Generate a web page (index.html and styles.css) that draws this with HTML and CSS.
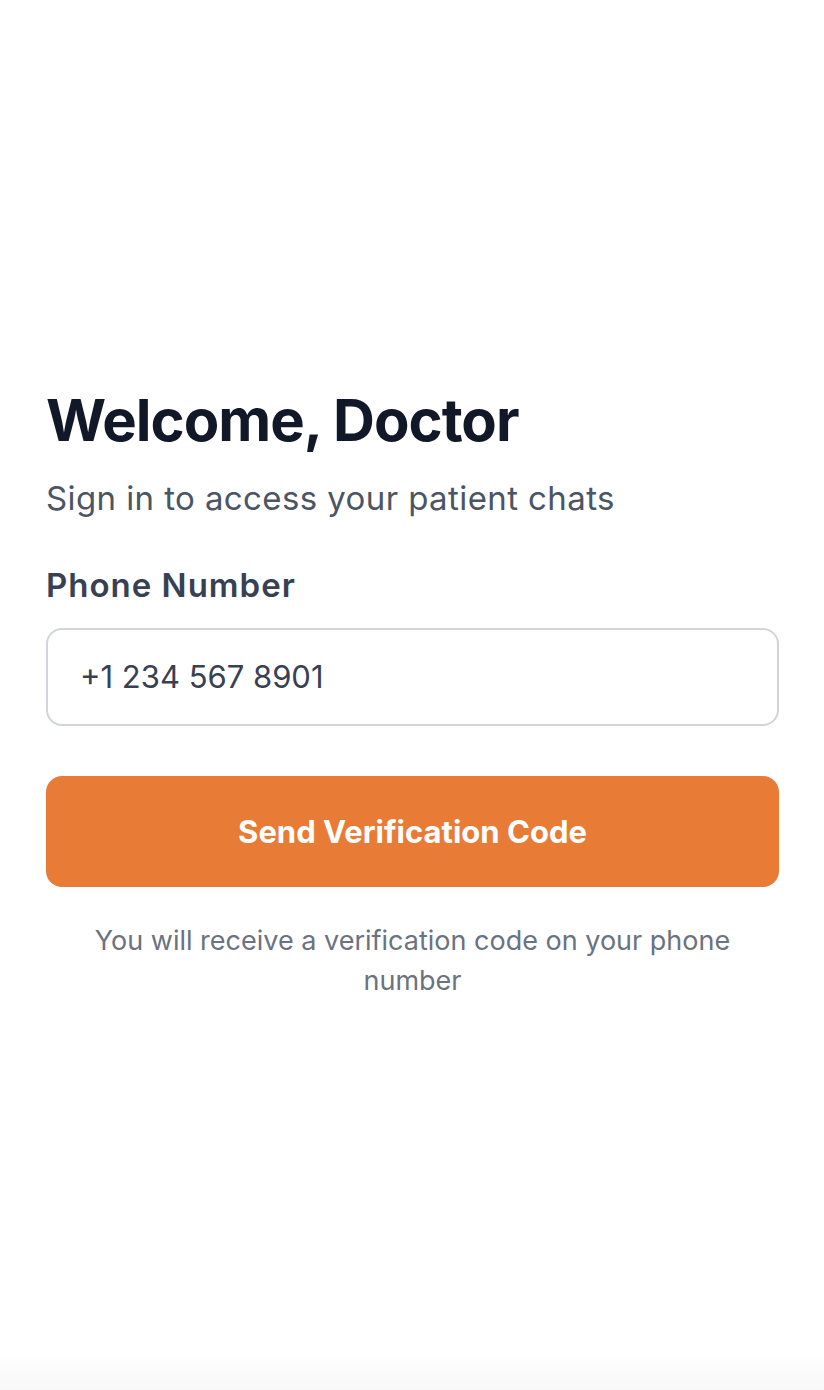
FILE: index.html
```html
<!DOCTYPE html>
<html lang="en">
<head>
<meta charset="utf-8">
<title>Sign in</title>
<link rel="stylesheet" href="styles.css">
</head>
<body>
<main class="page">
  <section class="card">
    <h1 class="title">Welcome, Doctor</h1>
    <p class="subtitle">Sign in to access your patient chats</p>
    <label class="label" for="phone">Phone Number</label>
    <input class="input" id="phone" type="tel" value="+1 234 567 8901">
    <button class="button" type="button">Send Verification Code</button>
    <p class="note">You will receive a verification code on your phone number</p>
  </section>
</main>
</body>
</html>
```

FILE: styles.css
```css
* { box-sizing: border-box; }
html, body { margin: 0; padding: 0; }
body {
  font-family: Inter, "Noto Sans", "Liberation Sans", sans-serif;
  background: linear-gradient(to bottom, #ffffff calc(100% - 40px), #f8f8f8 100%);
  min-height: 100vh;
}
.page {
  min-height: 100vh;
  display: flex;
  flex-direction: column;
  justify-content: center;
  padding: 0 45px 6px 46px;
}
.card { display: flex; flex-direction: column; }
.title {
  margin: 0;
  font-size: 58px;
  line-height: 72px;
  font-weight: 700;
  color: #111827;
  letter-spacing: -1px;
}
.subtitle {
  margin: 20px 0 0;
  font-size: 33px;
  line-height: 44px;
  color: #4b5563;
  letter-spacing: 0.4px;
}
.label {
  margin-top: 43px;
  font-size: 33px;
  line-height: 44px;
  font-weight: 600;
  color: #374151;
  letter-spacing: 1px;
}
.input {
  margin-top: 21px;
  height: 98px;
  width: 100%;
  border: 2px solid #d1d5db;
  border-radius: 16px;
  padding: 0 32px;
  font-family: inherit;
  font-size: 31px;
  color: #374151;
  background: #fff;
  outline: none;
}
.button {
  margin-top: 50px;
  height: 111px;
  width: 100%;
  border: none;
  border-radius: 16px;
  background: #e87c37;
  color: #ffffff;
  font-family: inherit;
  font-size: 31px;
  font-weight: 700;
}
.note {
  margin: 34px 0 0;
  text-align: center;
  font-size: 27px;
  line-height: 40px;
  color: #6b7280;
  padding: 0 40px;
}
```
